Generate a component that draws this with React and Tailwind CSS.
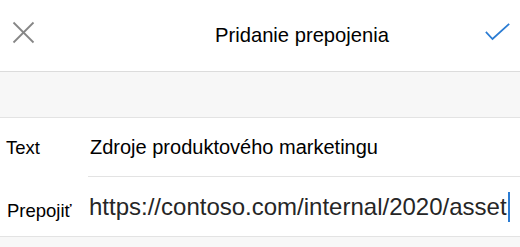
export default function App() {
  return (
    <div className="w-[520px] h-[247px] bg-[#f7f7f7] overflow-hidden" style={{ fontFamily: '"Liberation Sans", Arial, sans-serif' }}>
      {/* Header */}
      <div className="h-[72px] bg-white border-b border-[#dcdcdc] flex items-center relative">
        <button className="absolute left-[12px] top-[21px] w-[23px] h-[23px] flex items-center justify-center" aria-label="Zavrieť">
          <svg width="23" height="23" viewBox="0 0 23 23" fill="none" stroke="#858585" strokeWidth="1.8">
            <line x1="1.5" y1="1.5" x2="21.5" y2="21.5" />
            <line x1="21.5" y1="1.5" x2="1.5" y2="21.5" />
          </svg>
        </button>
        <div className="pl-[215px] text-[20.2px] text-black leading-none">Pridanie prepojenia</div>
        <button className="absolute left-[485px] top-[23px]" aria-label="Hotovo">
          <svg width="26" height="20" viewBox="0 0 26 20" fill="none" stroke="#2b7cd3" strokeWidth="1.8" strokeLinecap="square">
            <polyline points="1.5,9.5 7.5,16 23.5,1.5" />
          </svg>
        </button>
      </div>

      {/* Gray band */}
      <div className="h-[46px] bg-[#f7f7f7] border-b border-[#e3e3e3]" />

      {/* Form */}
      <div className="bg-white border-b border-[#e3e3e3]">
        <div className="flex items-center h-[59px]">
          <div className="w-[88px] pl-[6px] text-[18.5px] text-black">Text</div>
          <div className="flex-1 h-full flex items-center border-b border-[#e3e3e3] pl-[2px] text-[20px] text-black">
            Zdroje produktového marketingu
          </div>
        </div>
        <div className="flex items-center h-[59px]">
          <div className="w-[88px] pl-[7px] pt-[8px] text-[18.5px] text-black">Prepojiť</div>
          <div className="flex-1 flex items-center pl-[1px] text-[24px] text-[#262626] whitespace-nowrap">
            https://contoso.com/internal/2020/asset
            <span className="inline-block w-[2px] h-[30px] bg-[#2b7cd3] ml-[1px]" />
          </div>
        </div>
      </div>
    </div>
  );
}
